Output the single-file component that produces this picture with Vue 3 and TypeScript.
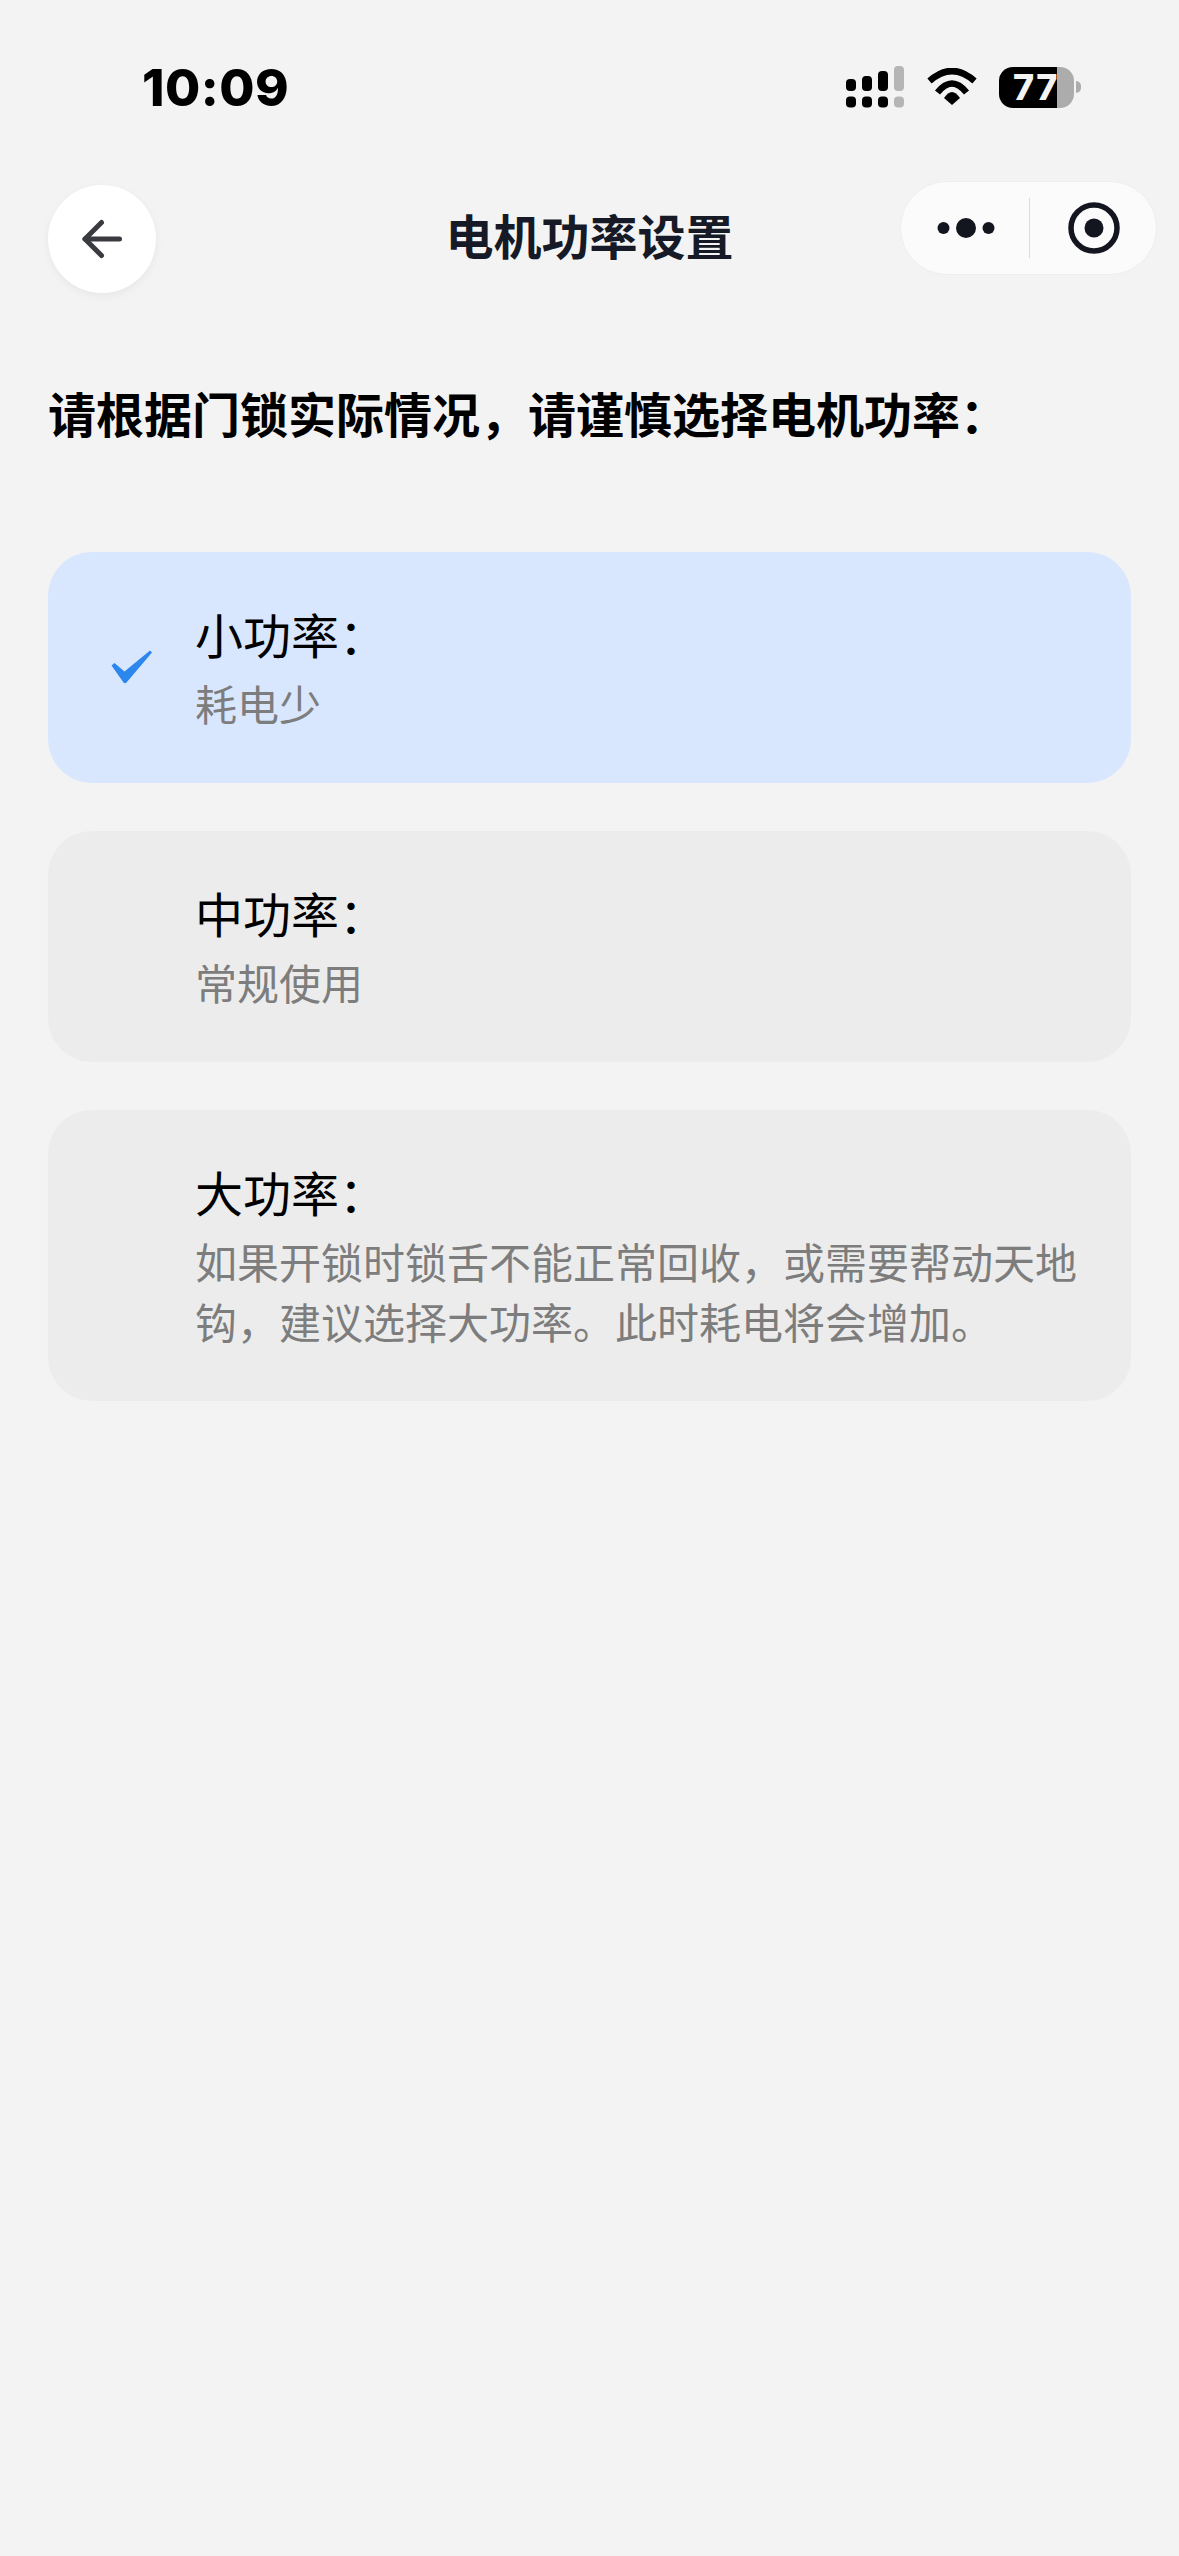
<script setup lang="ts">
interface Option { title: string; desc: string[]; selected: boolean }
const options: Option[] = [
  { title: '小功率：', desc: ['耗电少'], selected: true },
  { title: '中功率：', desc: ['常规使用'], selected: false },
  { title: '大功率：', desc: ['如果开锁时锁舌不能正常回收，或需要帮动天地', '钩，建议选择大功率。此时耗电将会增加。'], selected: false },
]
</script>

<template>
  <div class="page">
    <header class="status">
      <span class="time">10:09</span>
      <div class="status-icons">
        <svg class="signal" width="58" height="42" viewBox="0 0 58 42">
          <g fill="#000">
            <rect x="0" y="13" width="10" height="12" rx="4" />
            <rect x="16" y="10" width="10" height="15" rx="4" />
            <rect x="32" y="5" width="10" height="20" rx="4" />
            <rect x="0" y="30.500" width="10" height="11" rx="4" />
            <rect x="16" y="30.500" width="10" height="11" rx="4" />
            <rect x="32" y="30.500" width="10" height="11" rx="4" />
          </g>
          <g fill="#b5b5b5">
            <rect x="48" y="0" width="10" height="25" rx="4" />
            <rect x="48" y="30.500" width="10" height="11" rx="4" />
          </g>
        </svg>
        <svg class="wifi" width="50" height="38" viewBox="0 0 50 38">
          <g fill="none" stroke="#000" stroke-width="6.500">
            <path d="M2.500 13Q25 -7 47.500 13" />
            <path d="M10.500 24.500Q25 6.500 39.500 24.500" />
          </g>
          <path d="M17 30Q25 18 33 30L25 37Z" fill="#000" />
        </svg>
        <div class="battery">
          <div class="battery-body">
            <span class="battery-text">77</span>
          </div>
          <span class="battery-tip"></span>
        </div>
      </div>
    </header>

    <nav class="nav">
      <button class="back" type="button" aria-label="返回">
        <svg width="44" height="44" viewBox="0 0 44 44" fill="none" stroke="#3a3b40" stroke-width="5" stroke-linecap="round" stroke-linejoin="round">
          <path d="M39.500 22H5" />
          <path d="M21.500 5.500L5 22L21.500 38.500" />
        </svg>
      </button>
      <h1 class="nav-title">电机功率设置</h1>
      <div class="capsule">
        <svg width="58" height="22" viewBox="0 0 58 22" fill="#13161f">
          <circle cx="6.500" cy="11" r="6" />
          <circle cx="29" cy="11" r="10" />
          <circle cx="51.500" cy="11" r="6" />
        </svg>
        <span class="capsule-line"></span>
        <svg width="52" height="52" viewBox="0 0 52 52" fill="#13161f">
          <circle cx="26" cy="26" r="23" fill="none" stroke="#13161f" stroke-width="5.500" />
          <circle cx="26" cy="26" r="9.500" />
        </svg>
      </div>
    </nav>

    <main class="content">
      <p class="lead">请根据门锁实际情况，请谨慎选择电机功率：</p>
      <ul class="list">
        <li v-for="o in options" :key="o.title" class="card" :class="{ selected: o.selected }">
          <div class="check-col">
            <svg v-if="o.selected" width="42" height="34" viewBox="0 0 42 34">
              <path d="M0.500 15.500L3.500 13L13.500 21.500L39 0.500L41 2.500L15.500 32.500Q14 34 12.500 32.500Z" fill="#2b86ee" />
            </svg>
          </div>
          <div class="text-col">
            <div class="title">{{ o.title }}</div>
            <div v-for="d in o.desc" :key="d" class="desc">{{ d }}</div>
          </div>
        </li>
      </ul>
    </main>
  </div>
</template>

<style>
html, body { margin: 0; background: #f3f3f3; }
</style>

<style scoped>
.page {
  width: 1179px;
  height: 2556px;
  background: #f3f3f3;
  font-family: "Noto Sans CJK SC", "Noto Sans", sans-serif;
  overflow: hidden;
  box-sizing: border-box;
}
.status {
  height: 171px;
  box-sizing: border-box;
  padding: 57px 98px 0 142px;
  display: flex;
  justify-content: space-between;
  align-items: flex-start;
}
.time {
  font-family: Inter, "Liberation Sans", sans-serif;
  font-weight: 800;
  font-size: 51px;
  line-height: 62px;
  color: #000;
  letter-spacing: 0.5px;
}
.status-icons { display: flex; align-items: center; gap: 22px; padding-top: 9px; }
.signal { margin-right: 1px; }
.battery { display: flex; align-items: center; gap: 2px; }
.battery-body {
  width: 75px;
  height: 41px;
  border-radius: 14px;
  background: linear-gradient(to right, #000 0, #000 58px, #acacac 58px, #acacac 100%);
  display: flex;
  align-items: center;
  padding-left: 14px;
  box-sizing: border-box;
}
.battery-text {
  font-family: Inter, "Liberation Sans", sans-serif;
  font-weight: 800;
  font-size: 36px;
  line-height: 41px;
  color: #f3f3f3;
  letter-spacing: 1.500px;
}
.battery-tip {
  width: 5px;
  height: 12px;
  background: #acacac;
  border-radius: 0 6px 6px 0;
}
.nav {
  position: relative;
  height: 126px;
  display: flex;
  align-items: center;
  justify-content: center;
}
.back {
  position: absolute;
  left: 48px;
  top: 14px;
  width: 108px;
  height: 108px;
  padding: 0;
  border: 0;
  border-radius: 50%;
  background: #fff;
  box-shadow: 0 3px 8px rgba(0, 0, 0, 0.05);
  display: flex;
  align-items: center;
  justify-content: center;
}
.nav-title {
  margin: 0;
  font-size: 48px;
  line-height: 64px;
  font-weight: 700;
  color: #161a26;
}
.capsule {
  position: absolute;
  left: 900px;
  top: 10px;
  width: 257px;
  height: 94px;
  box-sizing: border-box;
  background: #fbfbfb;
  border: 1px solid #eeeeee;
  border-radius: 47px;
  display: flex;
  align-items: center;
  padding-left: 36px;
}
.capsule-line {
  width: 1px;
  height: 60px;
  background: #dcdcdc;
  margin: 0 38px 0 34px;
}
.content { padding: 0 48px; }
.lead {
  margin: 0;
  padding-top: 83px;
  font-size: 48px;
  line-height: 64px;
  font-weight: 700;
  color: #000;
  white-space: nowrap;
}
.list {
  list-style: none;
  margin: 108px 0 0;
  padding: 0;
  display: flex;
  flex-direction: column;
  gap: 48px;
}
.card {
  display: flex;
  border-radius: 44px;
  background: #ececec;
  padding: 49px 48px 50px 0;
}
.card.selected { background: #d8e7fd; }
.check-col {
  width: 147px;
  flex: none;
  display: flex;
  justify-content: flex-end;
  align-items: center;
  padding-right: 42px;
  box-sizing: border-box;
}
.text-col { flex: 1; min-width: 0; }
.title {
  font-size: 48px;
  line-height: 64px;
  color: #000;
}
.desc {
  font-size: 42px;
  line-height: 60px;
  color: #7d7d7d;
  white-space: nowrap;
}
.title + .desc { margin-top: 8px; }
</style>
